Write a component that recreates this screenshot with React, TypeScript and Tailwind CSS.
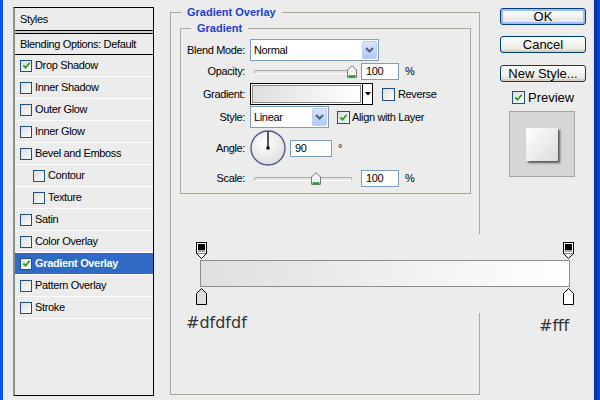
import React from 'react'

const STYLES = [
  { label: 'Drop Shadow', on: true },
  { label: 'Inner Shadow' },
  { label: 'Outer Glow' },
  { label: 'Inner Glow' },
  { label: 'Bevel and Emboss' },
  { label: 'Contour', sub: true },
  { label: 'Texture', sub: true },
  { label: 'Satin' },
  { label: 'Color Overlay' },
  { label: 'Gradient Overlay', on: true, active: true },
  { label: 'Pattern Overlay' },
  { label: 'Stroke' },
]

function Tick() {
  return (
    <svg viewBox="0 0 10 10" className="w-[9px] h-[9px]">
      <path d="M1.5 5 L4 7.5 L8.5 2" fill="none" stroke="#21a121" strokeWidth="2" />
    </svg>
  )
}

function Box({ on, big }: { on?: boolean; big?: boolean }) {
  return (
    <span
      className={`${big ? 'w-[13px] h-[13px]' : 'w-[12px] h-[12px]'} shrink-0 flex items-center justify-center border border-[#1c5180] bg-gradient-to-br from-[#dcdcd7] to-white`}
    >
      {on && <Tick />}
    </span>
  )
}

function Chevron() {
  return (
    <svg viewBox="0 0 9 6" className="w-[9px] h-[6px]">
      <path d="M1 1 L4.5 4.5 L8 1" fill="none" stroke="#4d6185" strokeWidth="2" />
    </svg>
  )
}

function Select({ value, wide }: { value: string; wide?: boolean }) {
  return (
    <div className={`${wide ? 'w-[129px]' : 'w-[79px]'} h-[22px] flex items-center border border-[#7f9db9] bg-white`}>
      <span className="flex-1 pl-[3px]">{value}</span>
      <span className="w-[15px] h-[18px] mr-[1px] rounded-[2px] border border-[#b9cdf7] bg-gradient-to-b from-[#dbe6fd] to-[#b3c8f4] flex items-center justify-center">
        <Chevron />
      </span>
    </div>
  )
}

function Thumb() {
  return (
    <svg viewBox="0 0 10 13" className="w-[10px] h-[13px]">
      <path d="M0.5 5 L5 0.5 L9.5 5 V12.5 H0.5 Z" fill="#f4f4f4" stroke="#7a7a7a" />
      <path d="M1.5 11.2 H8.5" stroke="#21a121" strokeWidth="2" />
    </svg>
  )
}

function Slider({ at }: { at: number }) {
  return (
    <div className="relative w-[98px] h-[13px] ml-[4px]">
      <div className="absolute left-0 right-0 top-[5px] h-[4px] rounded-full border border-[#a9a9a9] border-b-white bg-[#e4e4e4]" />
      <div className="absolute top-0" style={{ left: at }}>
        <Thumb />
      </div>
    </div>
  )
}

function Field({ value, w }: { value: string; w: string }) {
  return <div className={`${w} h-[17px] flex items-center pl-[4px] border border-[#7f9db9] bg-white`}>{value}</div>
}

function Row({ label, className, children }: { label: string; className: string; children: React.ReactNode }) {
  return (
    <div className={`flex items-center gap-[5px] ${className}`}>
      <span className="w-[64px] text-right">{label}</span>
      {children}
    </div>
  )
}

function XPButton({ label, focus }: { label: string; focus?: boolean }) {
  return (
    <button
      className={`h-[17px] w-[86px] rounded-[3px] border border-[#003c74] bg-gradient-to-b from-white to-[#e4e4dc] text-[13px] leading-none tracking-normal text-black ${focus ? 'shadow-[inset_0_0_0_2px_#9fbdf2]' : 'shadow-[inset_0_-2px_0_#d6d0c5]'}`}
    >
      {label}
    </button>
  )
}

function StopTop() {
  return (
    <svg viewBox="0 0 11 17" className="w-[11px] h-[17px]">
      <rect x="0.5" y="0.5" width="10" height="11" fill="#fff" stroke="#000" />
      <rect x="2" y="2" width="7" height="6" fill="#000" />
      <rect x="2" y="8" width="7" height="2" fill="#a8a8a8" />
      <path d="M0.5 11.5 L5.5 16.5 L10.5 11.5" fill="#fff" stroke="#000" />
    </svg>
  )
}

function StopBottom({ color }: { color: string }) {
  return (
    <svg viewBox="0 0 11 17" className="w-[11px] h-[17px]">
      <path d="M0.5 16.5 V5.5 L5.5 0.5 L10.5 5.5 V16.5 Z" fill={color} stroke="#000" />
    </svg>
  )
}

export default function App() {
  return (
    <div className="relative w-[600px] h-[400px] overflow-hidden flex items-start bg-[#ececec] text-[11px] tracking-[-0.35px] text-black font-[family-name:'Liberation_Sans',Arial,sans-serif]">
      {/* window edge */}
      <div className="w-[3px] h-full bg-[#0055ea]" />

      {/* Styles list */}
      <div className="ml-[10px] mt-[7px] w-[141px] h-[389px] border border-black border-l-2 border-l-[#8e8e8e]">
        <div className="h-[22px] flex items-center pl-[5px]">Styles</div>
        <div className="h-[4px] border-y border-black bg-[#cfcfcf]" />
        <div className="h-[21px] flex items-center pl-[5px] border-b border-black">Blending Options: Default</div>
        {STYLES.map(s => (
          <div
            key={s.label}
            className={`h-[22px] flex items-center gap-[3px] border-b border-white ${s.sub ? 'pl-[18px]' : 'pl-[5px]'} ${s.active ? 'bg-[#316ac5] text-white font-bold' : ''}`}
          >
            <Box on={s.on} />
            <span>{s.label}</span>
          </div>
        ))}
      </div>

      {/* Gradient Overlay group */}
      <fieldset className="ml-[16px] mt-[5px] w-[310px] h-[390px] border border-[#aca899]">
        <legend className="ml-[10px] px-[6px] leading-[14px] font-bold tracking-normal text-[#1d41d5]">Gradient Overlay</legend>
        <fieldset className="ml-[9px] mt-[2px] w-[291px] border border-[#aca899] pb-[6px]">
          <legend className="ml-[10px] px-[6px] leading-[14px] font-bold tracking-normal text-[#1d41d5]">Gradient</legend>
          <div className="pt-[4px] flex flex-col">
            <Row label="Blend Mode:" className="h-[22px]">
              <Select value="Normal" wide />
            </Row>
            <Row label="Opacity:" className="h-[17px] mt-[2px]">
              <Slider at={93} />
              <Field value="100" w="w-[38px] ml-[4px]" />
              <span className="ml-[1px]">%</span>
            </Row>
            <Row label="Gradient:" className="h-[22px] mt-[3px]">
              <div className="w-[123px] h-[22px] flex border border-black bg-white">
                <div className="flex-1 m-[1px] border border-[#8a8a8a] bg-gradient-to-r from-[#dfdfdf] to-white" />
                <div className="w-[10px] border-l border-black flex items-center justify-center">
                  <svg viewBox="0 0 6 4" className="w-[6px] h-[4px]">
                    <path d="M0 0 H6 L3 3.5 Z" fill="#000" />
                  </svg>
                </div>
              </div>
              <span className="ml-[4px] flex items-center gap-[3px]">
                <Box big />
                <span>Reverse</span>
              </span>
            </Row>
            <Row label="Style:" className="h-[22px] mt-[1px]">
              <Select value="Linear" />
              <span className="ml-[3px] flex items-center gap-[2px]">
                <Box big on />
                <span>Align with Layer</span>
              </span>
            </Row>
            <Row label="Angle:" className="h-[36px] mt-[2px]">
              <svg viewBox="0 0 36 36" className="w-[36px] h-[36px]">
                <defs>
                  <radialGradient id="dial" cx="40%" cy="35%" r="70%">
                    <stop offset="0" stopColor="#ffffff" />
                    <stop offset="1" stopColor="#dedede" />
                  </radialGradient>
                </defs>
                <circle cx="18" cy="18" r="17" fill="url(#dial)" stroke="#4e5d8c" strokeWidth="1.4" />
                <line x1="18" y1="18" x2="18" y2="1.5" stroke="#000" strokeWidth="1.3" />
                <rect x="16.5" y="16.5" width="3" height="3" fill="#000" />
              </svg>
              <Field value="90" w="w-[42px] -ml-[1px]" />
              <span className="self-start mt-[10px] ml-[1px]">°</span>
            </Row>
            <Row label="Scale:" className="h-[17px] mt-[4px]">
              <Slider at={57} />
              <Field value="100" w="w-[38px] ml-[4px]" />
              <span className="ml-[1px]">%</span>
            </Row>
          </div>
        </fieldset>
      </fieldset>

      {/* Buttons */}
      <div className="ml-[20px] mt-[8px] w-[86px] flex flex-col">
        <XPButton label="OK" focus />
        <div className="mt-[11px]"><XPButton label="Cancel" /></div>
        <div className="mt-[11px]"><XPButton label="New Style..." /></div>
        <label className="mt-[9px] ml-[12px] h-[13px] flex items-center gap-[3px] text-[13px] leading-[13px] tracking-normal">
          <Box big on />
          <span>Preview</span>
        </label>
        <div className="mt-[7px] ml-[9px] w-[66px] h-[66px] border border-[#a6a6a0] bg-[#d6d6d6] flex items-center justify-center">
          <div className="w-[32px] h-[33px] bg-gradient-to-br from-white to-[#dcdcdc] shadow-[2px_2px_2px_rgba(0,0,0,0.6)]" />
        </div>
      </div>

      <div className="flex-1" />
      <div className="w-[6px] h-full bg-gradient-to-r from-[#0026a8] to-[#0a4ade]" />

      {/* Gradient editor laid over the group */}
      <div className="absolute left-[172px] top-[234px] w-[420px] h-[100px]">
        <div className="h-[79px] bg-[#ececec]" />
        <div className="absolute left-[24px] top-[8px]"><StopTop /></div>
        <div className="absolute left-[391px] top-[8px]"><StopTop /></div>
        <div className="absolute left-[28px] top-[26px] w-[370px] h-[27px] border border-[#8c8c8c] bg-gradient-to-r from-[#dfdfdf] to-white" />
        <div className="absolute left-[24px] top-[54px]"><StopBottom color="#dfdfdf" /></div>
        <div className="absolute left-[391px] top-[54px]"><StopBottom color="#ffffff" /></div>
        <div className="absolute left-[14px] top-[77px] text-[16px] tracking-normal text-[#333] font-[family-name:'DejaVu_Sans',sans-serif]">#dfdfdf</div>
        <div className="absolute left-[367px] top-[80px] text-[16px] tracking-normal text-[#333] font-[family-name:'DejaVu_Sans',sans-serif]">#fff</div>
      </div>
    </div>
  )
}
